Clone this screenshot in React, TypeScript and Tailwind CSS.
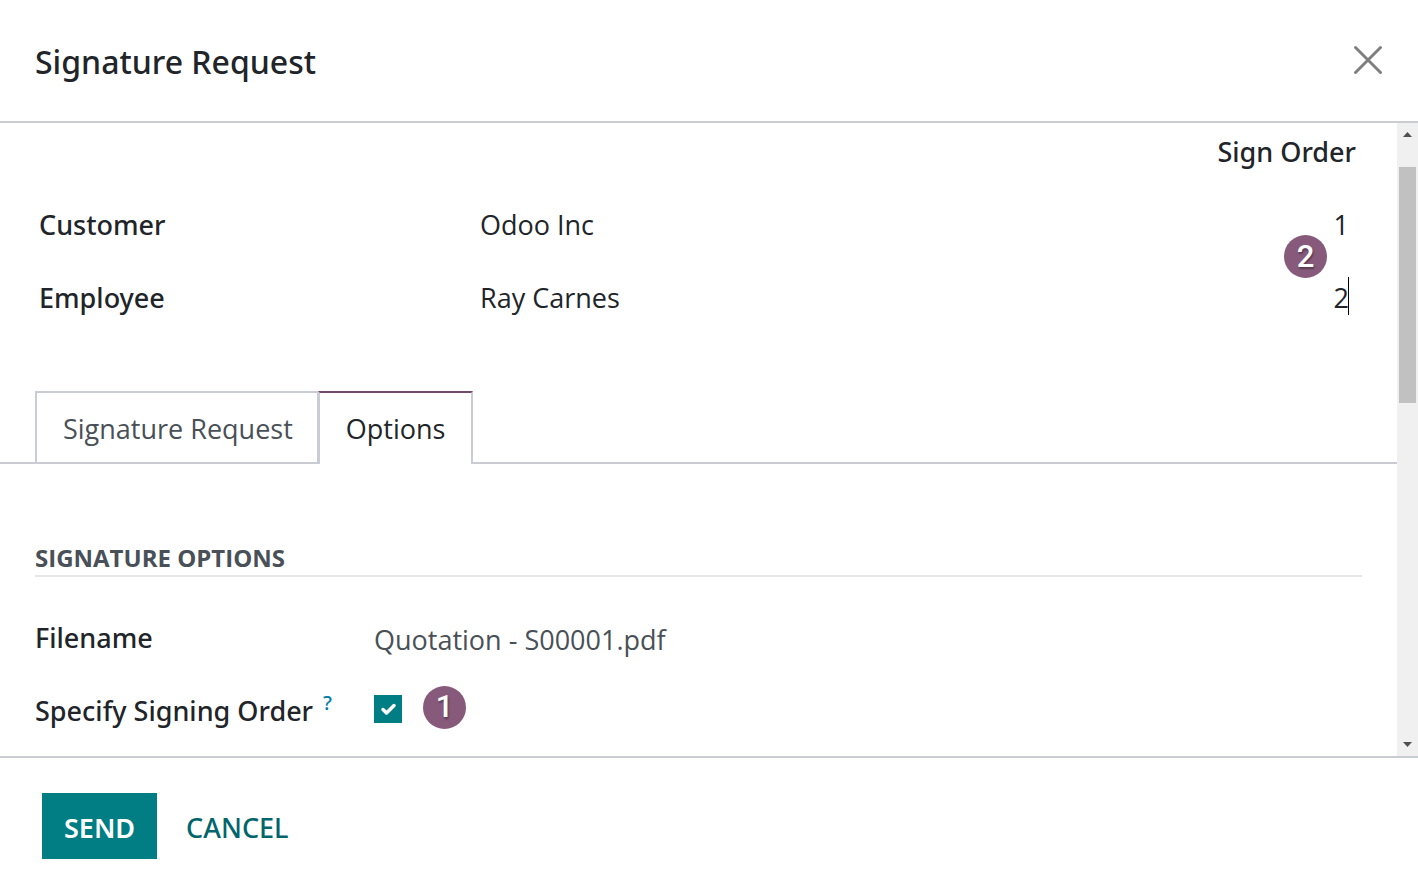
import { useState } from "react";

const signers = [
  { role: "Customer", partner: "Odoo Inc", order: "1" },
  { role: "Employee", partner: "Ray Carnes", order: "2" },
];

function Badge({ children }: { children: string }) {
  return (
    <span className="flex size-[43px] items-center justify-center rounded-full bg-[#875a7b] pb-px font-[Roboto,sans-serif] text-[31px] leading-none font-medium text-white [text-shadow:1px_2px_2px_rgba(0,0,0,0.35)]">
      {children}
    </span>
  );
}

function Scrollbar() {
  return (
    <div aria-hidden="true" className="flex w-[21px] shrink-0 flex-col items-center justify-between bg-[#f0f0f0]">
      <div className="flex flex-col items-center">
        <svg viewBox="0 0 9 5" className="mt-[9px] mb-[30px] h-[5px] w-[9px]" fill="#505050">
          <path d="M0 5L4.500 0L9 5Z" />
        </svg>
        <div className="h-[236px] w-[17px] bg-[#c1c1c1]" />
      </div>
      <svg viewBox="0 0 9 5" className="mb-[9px] h-[5px] w-[9px]" fill="#505050">
        <path d="M0 0L4.500 5L9 0Z" />
      </svg>
    </div>
  );
}

export default function App() {
  const [orders, setOrders] = useState(signers.map((s) => s.order));
  const [ordered, setOrdered] = useState(true);

  return (
    <div
      role="dialog"
      aria-labelledby="dialog-title"
      className="flex min-h-screen flex-col bg-white font-['Open_Sans','Noto_Sans',sans-serif] text-[27px] leading-[40px] text-[#212529]"
    >
      <header className="flex items-center justify-between border-b-2 border-[#c9ccd2] pt-[36px] pr-[34px] pb-[35px] pl-[35px]">
        <h1 id="dialog-title" className="pt-[2px] font-['Noto_Sans',sans-serif] text-[32px] leading-[48px] font-medium">
          Signature Request
        </h1>
        <button type="button" aria-label="Close" className="pb-[2px]">
          <svg viewBox="0 0 32 32" className="size-8" stroke="#7f7f7f" strokeWidth="3" strokeLinecap="round" fill="none">
            <path d="M3.500 3.500L28.500 28.500M28.500 3.500L3.500 28.500" />
          </svg>
        </button>
      </header>

      <div className="flex flex-1 border-b-2 border-[#c9ccd2]">
        <main className="min-w-0 flex-1">
          <div className="relative pr-[41px] pl-[39px]">
            <table className="w-full table-fixed">
              <thead>
                <tr className="h-[65px] align-top font-['Noto_Sans',sans-serif]">
                  <th className="w-[441px]" aria-label="Role" />
                  <th aria-label="Signer" />
                  <th className="w-[200px] pt-[9px] text-right font-medium">Sign Order</th>
                </tr>
              </thead>
              <tbody>
                {signers.map((s, i) => (
                  <tr key={s.role} className="h-[73px]">
                    <th scope="row" className="text-left font-['Noto_Sans',sans-serif] font-medium">
                      {s.role}
                    </th>
                    <td>{s.partner}</td>
                    <td className="pr-[7px]">
                      <div className="flex items-center justify-end">
                        <input
                          aria-label={`Sign order for ${s.role}`}
                          value={orders[i]}
                          onChange={(e) => setOrders(orders.map((o, j) => (j === i ? e.target.value : o)))}
                          className="w-12 text-right outline-none"
                        />
                        {i === 1 && <span className="mb-1 -ml-px h-[38px] w-px bg-black" />}
                      </div>
                    </td>
                  </tr>
                ))}
              </tbody>
            </table>
            <div className="absolute top-[112px] right-[70px]">
              <Badge>2</Badge>
            </div>
          </div>

          <div role="tablist" className="mt-[57px] flex">
            <span className="w-[35px] border-b-2 border-[#c9ccd2]" />
            <button
              type="button"
              role="tab"
              aria-selected="false"
              className="h-[73px] border-2 border-[#c9ccd2] pt-[2px] pr-[24px] pl-[26px] text-[#495057]"
            >
              Signature Request
            </button>
            <button
              type="button"
              role="tab"
              aria-selected="true"
              className="-ml-px h-[73px] border-x-2 border-t-2 border-x-[#c9ccd2] border-t-[#714b67] px-[26px] pt-[2px] pb-[2px]"
            >
              Options
            </button>
            <span className="flex-1 border-b-2 border-[#c9ccd2]" />
          </div>

          <section className="pt-[77px] pr-[35px] pb-[8px] pl-[35px]">
            <h2 className="border-b-2 border-[#e6e6e6] text-[24px] leading-[34px] font-bold text-[#495057]">
              SIGNATURE OPTIONS
            </h2>
            <div className="mt-[24px] flex h-[73px] items-center">
              <span className="w-[339px] font-['Noto_Sans',sans-serif] font-medium">Filename</span>
              <span className="pt-1 text-[#495057]">Quotation - S00001.pdf</span>
            </div>
            <div className="flex h-[73px] items-center">
              <label htmlFor="signing-order" className="flex w-[339px] gap-[10px] font-['Noto_Sans',sans-serif] font-medium">
                Specify Signing Order
                <span className="text-[20px] leading-[24px] text-[#017ca8]">?</span>
              </label>
              <span className="mb-1 flex items-center gap-[21px]">
                <span className="grid size-7 place-items-center">
                  <input
                    id="signing-order"
                    type="checkbox"
                    checked={ordered}
                    onChange={(e) => setOrdered(e.target.checked)}
                    className="col-start-1 row-start-1 size-7 appearance-none border border-[#017e84] checked:bg-[#017e84]"
                  />
                  {ordered && (
                    <svg viewBox="0 0 28 28" className="pointer-events-none col-start-1 row-start-1 size-7" fill="none" stroke="white" strokeWidth="3.500" strokeLinecap="round" strokeLinejoin="round">
                      <path d="M9 14.500L12.500 18L20 10.500" />
                    </svg>
                  )}
                </span>
                <span className="pb-[3px]">
                  <Badge>1</Badge>
                </span>
              </span>
            </div>
          </section>
        </main>
        <Scrollbar />
      </div>

      <footer className="flex gap-[7px] px-[42px] py-[35px] font-['Noto_Sans',sans-serif] font-medium">
        <button type="button" className="h-[66px] bg-[#017e84] px-[22px] pt-1 font-semibold text-white">
          SEND
        </button>
        <button type="button" className="h-[66px] px-[22px] pt-1 text-[#01666b]">
          CANCEL
        </button>
      </footer>
    </div>
  );
}
